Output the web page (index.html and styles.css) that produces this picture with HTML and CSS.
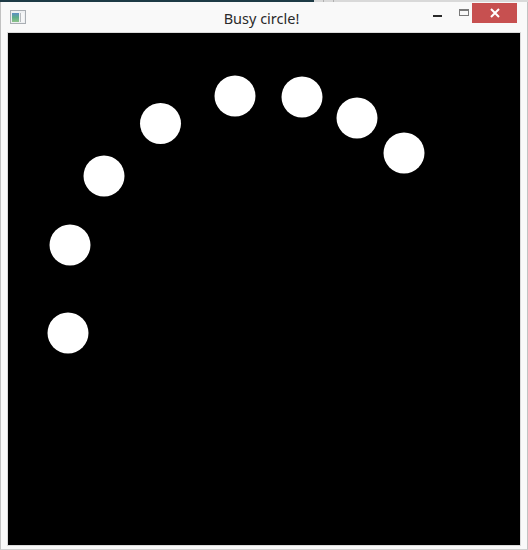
FILE: index.html
```html
<!DOCTYPE html>
<html>
<head>
<meta charset="utf-8">
<link rel="stylesheet" href="styles.css">
<title>Busy circle!</title>
</head>
<body>
<div class="desktop-strip">
  <div class="strip-dark"></div>
  <div class="strip-light"><span class="sep"></span><span class="sep"></span></div>
</div>
<div class="window">
  <div class="titlebar">
    <div class="tb-left">
      <svg class="app-icon" width="16" height="14" viewBox="0 0 16 14">
        <defs>
          <linearGradient id="g" x1="0" y1="0" x2="0" y2="1">
            <stop offset="0" stop-color="#5d8fc4"/>
            <stop offset="0.5" stop-color="#5fae8a"/>
            <stop offset="1" stop-color="#8fc38a"/>
          </linearGradient>
        </defs>
        <rect x="0.5" y="0.5" width="15" height="13" fill="#eef0f2" stroke="#a9aeb3"/>
        <rect x="2" y="3" width="7" height="9" fill="url(#g)"/>
        <rect x="10" y="3" width="1" height="9" fill="#b8bcc0"/>
        <rect x="11" y="3" width="3" height="9" fill="#f6f7f8"/>
      </svg>
    </div>
    <div class="title">Busy circle!</div>
    <div class="tb-right">
      <span class="btn-min"></span>
      <span class="btn-max"></span>
      <span class="btn-close">
        <svg width="10" height="10" viewBox="0 0 10 10"><path d="M1 1 L9 9 M9 1 L1 9" stroke="#fff" stroke-width="2"/></svg>
      </span>
    </div>
  </div>
  <div class="client">
    <div class="canvas">
      <svg width="512" height="512" viewBox="0 0 512 512">
        <g fill="#fff">
          <circle cx="60" cy="300" r="20.5"/>
          <circle cx="62" cy="212" r="20.5"/>
          <circle cx="96" cy="143" r="20.5"/>
          <circle cx="152.5" cy="90.5" r="20.5"/>
          <circle cx="227" cy="63" r="20.5"/>
          <circle cx="294" cy="64" r="20.5"/>
          <circle cx="349" cy="85" r="20.5"/>
          <circle cx="396" cy="120" r="20.5"/>
        </g>
      </svg>
    </div>
  </div>
</div>
</body>
</html>
```
FILE: styles.css
```css
html, body {
  margin: 0;
  padding: 0;
  background: #f7f7f7;
}
body {
  width: 528px;
  height: 550px;
  overflow: hidden;
  font-family: "Noto Sans", "Open Sans", sans-serif;
}
.desktop-strip {
  display: flex;
  height: 2px;
}
.strip-dark {
  width: 314px;
  background: #1d3a45;
}
.strip-light {
  flex: 1;
  background: #d9d9d9;
  display: flex;
  gap: 9px;
  padding-left: 9px;
}
.sep {
  width: 1px;
  background: #b0b0b0;
}
.window {
  height: 548px;
  box-sizing: border-box;
  background: #f9f9f9;
  border-left: 1px solid #c2c2c2;
  border-right: 1px solid #c2c2c2;
  border-bottom: 1px solid #d0d0d0;
  display: flex;
  flex-direction: column;
}
.titlebar {
  height: 30px;
  display: grid;
  grid-template-columns: 1fr auto 1fr;
  align-items: start;
}
.tb-left {
  display: flex;
}
.app-icon {
  display: block;
  margin: 8px 0 0 9px;
}
.title {
  margin-top: 6px;
  margin-right: 5px;
  font-size: 14.5px;
  line-height: 20px;
  color: #2a2a2a;
}
.tb-right {
  display: flex;
  justify-content: flex-end;
  align-items: flex-start;
}
.btn-min {
  width: 9px;
  height: 2px;
  margin-top: 13px;
  margin-right: 17px;
  background: #2a2a2a;
}
.btn-max {
  width: 10px;
  height: 7px;
  box-sizing: border-box;
  margin-top: 7px;
  margin-right: 3px;
  border: 1px solid #7a7a7a;
  border-top-width: 2px;
}
.btn-close {
  width: 45px;
  height: 20px;
  margin-top: 1px;
  margin-right: 10px;
  background: #c75050;
  display: flex;
  align-items: center;
  justify-content: center;
}
.btn-close svg {
  display: block;
}
.client {
  padding: 0 5px 3px 6px;
}
.canvas {
  width: 512px;
  height: 512px;
  border: 1px solid #dadada;
  background: #000;
}
.canvas svg {
  display: block;
}
```
